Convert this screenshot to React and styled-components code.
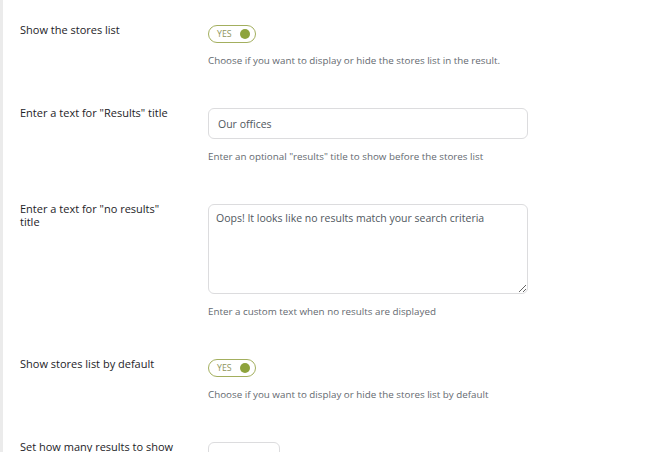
import styled, { createGlobalStyle } from 'styled-components'

const GlobalStyle = createGlobalStyle`
	html, body {
		margin: 0;
		padding: 0;
		background: #ffffff;
	}
	body {
		font-family: "Open Sans", "Noto Sans", sans-serif;
		color: #1d2327;
	}
`

const Page = styled.div`
	width: 668px;
	height: 452px;
	overflow: hidden;
	box-sizing: border-box;
	border-left: 3px solid #ebebeb;
	padding: 5px 0 0 17px;
`

const Row = styled.div`
	display: grid;
	grid-template-columns: 188px 320px;
	padding: 17px 0 20px;
`

const Label = styled.div`
	font-size: 11px;
	line-height: 13px;
	color: #1d2327;
	padding: 1px 34px 0 0;
`

const Field = styled.div`
	padding-top: 3px;
	display: flex;
	flex-direction: column;
	align-items: flex-start;
`

const Description = styled.p`
	margin: 11px 0 0;
	font-size: 9.8px;
	line-height: 14px;
	color: #646970;
	white-space: nowrap;
`

const Toggle = styled.div`
	box-sizing: border-box;
	width: 48px;
	height: 18px;
	border: 1px solid #a3af5e;
	border-radius: 9px;
	display: flex;
	align-items: center;
	justify-content: space-between;
	padding: 0 5px 0 8px;
`

const ToggleText = styled.span`
	font-size: 8.8px;
	color: #8e955c;
`

const Knob = styled.span`
	width: 10px;
	height: 10px;
	border-radius: 50%;
	background: #8ea33c;
`

const TextInput = styled.input`
	box-sizing: border-box;
	width: ${p => p.$width || 320}px;
	height: 31px;
	border: 1px solid #dcdcde;
	border-radius: 6px;
	padding: 0 9px;
	font-family: "Open Sans", "Noto Sans", sans-serif;
	font-size: 10.5px;
	color: #50575e;
	outline: none;
	background: #fff;
`

const TextArea = styled.textarea`
	box-sizing: border-box;
	width: 320px;
	height: 90px;
	border: 1px solid #dcdcde;
	border-radius: 6px;
	padding: 6px 7px;
	font-family: "Open Sans", "Noto Sans", sans-serif;
	font-size: 10.5px;
	line-height: 14px;
	color: #50575e;
	outline: none;
	resize: vertical;
	display: block;
`

const Switch = () => (
	<Toggle>
		<ToggleText>YES</ToggleText>
		<Knob />
	</Toggle>
)

export default function App() {
	return (
		<>
			<GlobalStyle />
			<Page>
				<Row>
					<Label>Show the stores list</Label>
					<Field>
						<Switch />
						<Description>Choose if you want to display or hide the stores list in the result.</Description>
					</Field>
				</Row>
				<Row>
					<Label>Enter a text for "Results" title</Label>
					<Field>
						<TextInput defaultValue="Our offices" />
						<Description>Enter an optional "results" title to show before the stores list</Description>
					</Field>
				</Row>
				<Row>
					<Label>Enter a text for "no results" title</Label>
					<Field>
						<TextArea defaultValue="Oops! It looks like no results match your search criteria" />
						<Description>Enter a custom text when no results are displayed</Description>
					</Field>
				</Row>
				<Row>
					<Label>Show stores list by default</Label>
					<Field>
						<Switch />
						<Description>Choose if you want to display or hide the stores list by default</Description>
					</Field>
				</Row>
				<Row>
					<Label>Set how many results to show</Label>
					<Field>
						<TextInput $width={72} defaultValue="" />
					</Field>
				</Row>
			</Page>
		</>
	)
}
